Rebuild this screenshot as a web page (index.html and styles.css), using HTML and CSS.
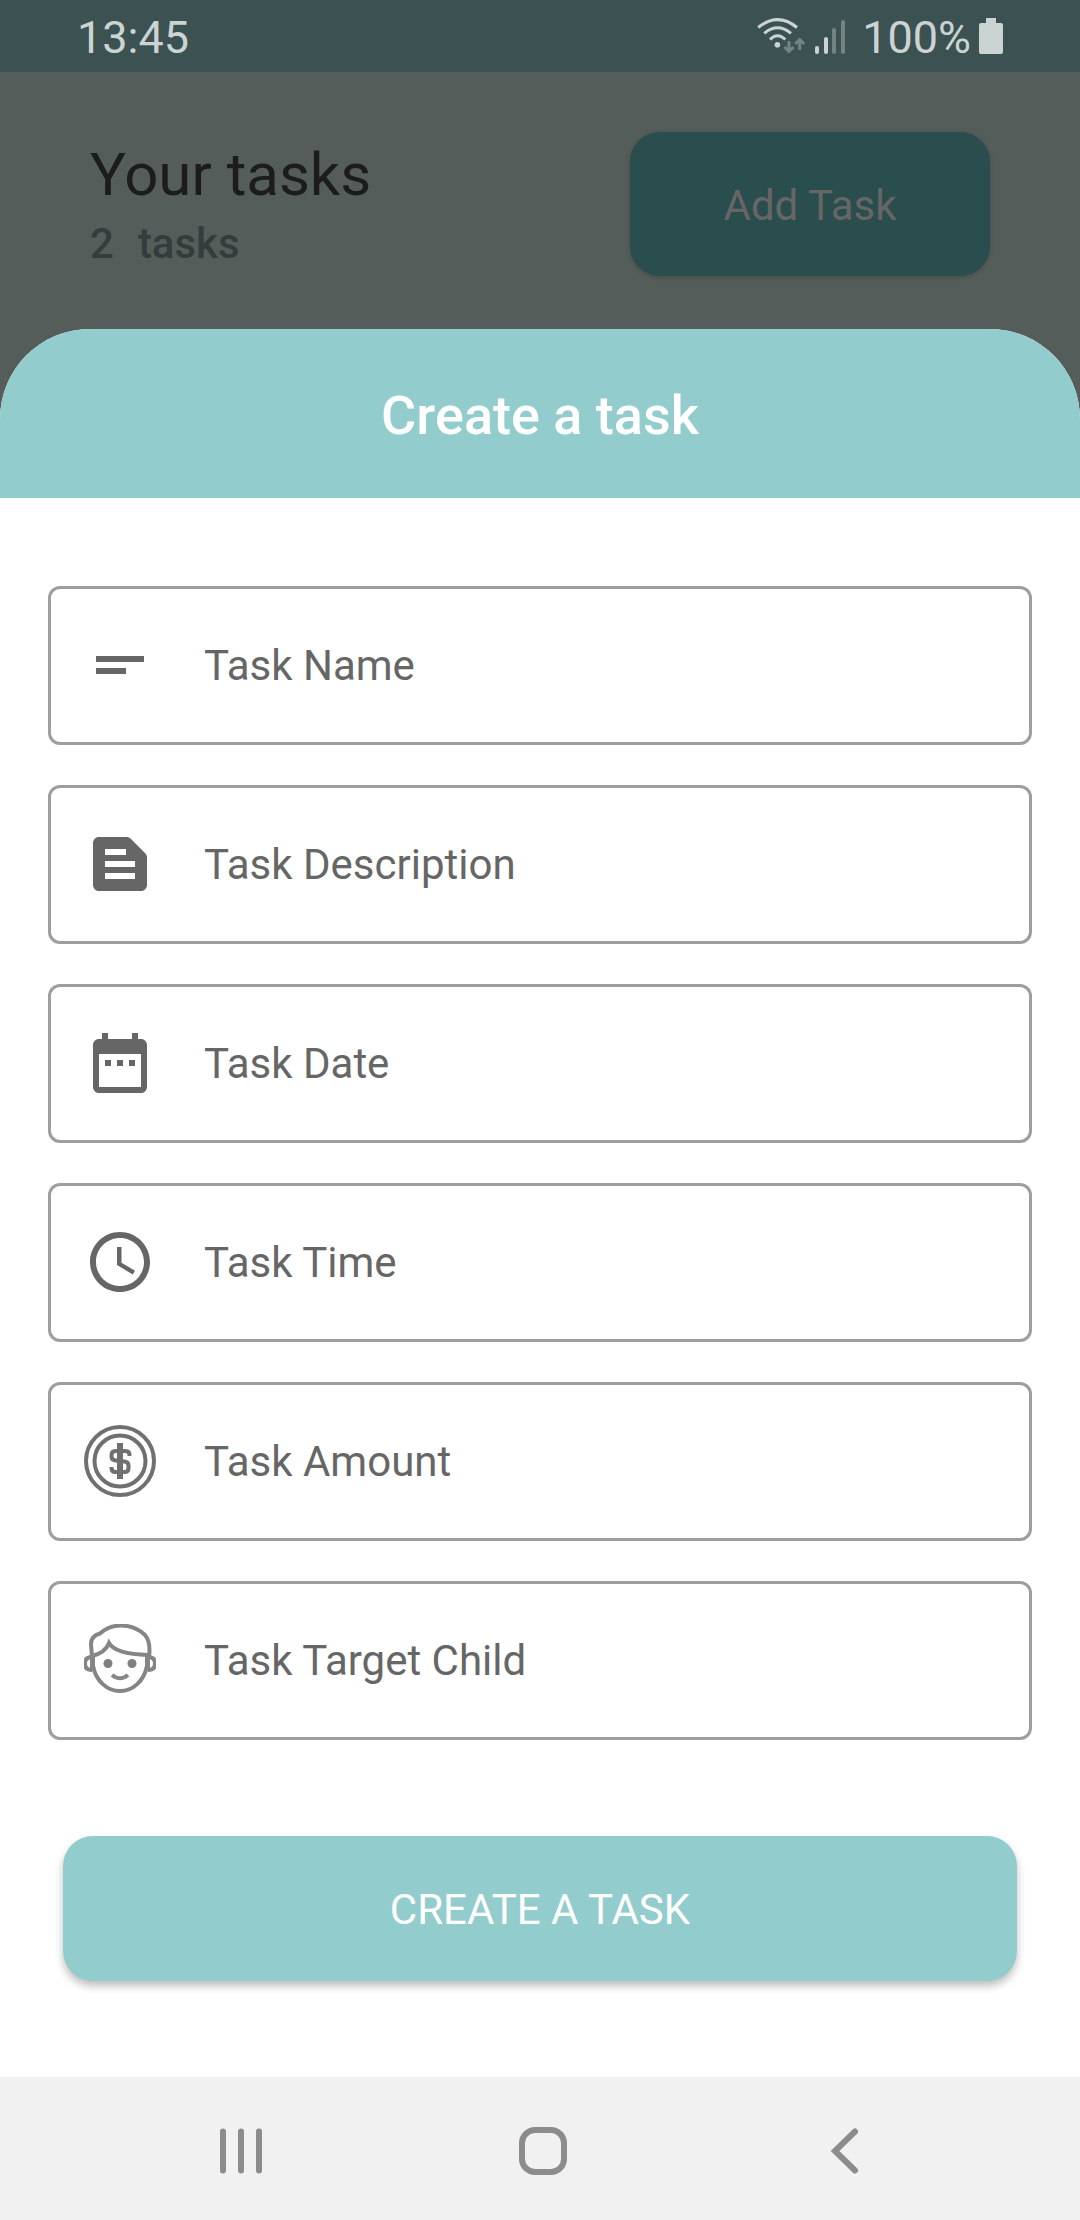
FILE: index.html
```html
<!DOCTYPE html>
<html lang="en">
<head>
<meta charset="utf-8">
<meta name="viewport" content="width=device-width, initial-scale=1">
<title>Create a task</title>
<link rel="stylesheet" href="styles.css">
</head>
<body class="screen">
  <div class="status">
    <span class="status-time">13:45</span>
    <svg class="status-wifi" width="48" height="36" viewBox="0 0 48 36" fill="none" stroke="currentColor" stroke-width="3" aria-hidden="true">
      <path d="M1.200 9.500Q20.500-6.200 40 9.500M7.300 15.300Q20.500 4.300 34 15.300M13 21.500Q20.500 14 28.300 21.500"/>
      <circle cx="20.400" cy="26.800" r="2.800" fill="currentColor" stroke="none"/>
      <path class="dim" d="M32 23v10M27.500 29l4.500 4.500 4.500-4.500M42.700 32V22M38.200 26l4.500-4.500 4.500 4.500"/>
    </svg>
    <svg class="status-signal" width="32" height="36" viewBox="0 0 32 36" fill="currentColor" aria-hidden="true">
      <rect x="1" y="28" width="4" height="8" rx="2"/>
      <rect x="10" y="19" width="4" height="17" rx="2"/>
      <rect class="dim-fill" x="18" y="10" width="4" height="26" rx="2"/>
      <rect class="dim-fill" x="27" y="2" width="4" height="34" rx="2"/>
    </svg>
    <span class="status-level">100%</span>
    <svg width="24" height="36" viewBox="0 0 24 36" fill="currentColor" aria-hidden="true">
      <path d="M7 0h10v5h5a2 2 0 0 1 2 2v27a2 2 0 0 1-2 2H2a2 2 0 0 1-2-2V7a2 2 0 0 1 2-2h5z"/>
    </svg>
  </div>

  <header class="header">
    <div>
      <h1 class="header-title">Your tasks</h1>
      <p class="header-count"><span>2</span><span>tasks</span></p>
    </div>
    <button class="add-button" type="button">Add Task</button>
  </header>

  <main class="sheet">
    <h2 class="sheet-title">Create a task</h2>
    <form class="form">
      <label class="field">
        <svg class="icon" viewBox="0 0 24 24" aria-hidden="true"><path d="M4 9h16v2H4zM4 13h10v2H4z"/></svg>
        <input class="input" type="text" placeholder="Task Name" aria-label="Task Name">
      </label>
      <label class="field">
        <svg class="icon" viewBox="0 0 24 24" aria-hidden="true"><path fill-rule="evenodd" d="M20.410 8.410l-4.830-4.830C15.210 3.210 14.700 3 14.170 3H5c-1.100 0-2 .9-2 2v14c0 1.100.9 2 2 2h14c1.100 0 2-.9 2-2V9.830c0-.53-.21-1.040-.59-1.420zM7 7h7v2H7zM17 17H7v-2h10zM17 13H7v-2h10z"/></svg>
        <input class="input" type="text" placeholder="Task Description" aria-label="Task Description">
      </label>
      <label class="field">
        <svg class="icon" viewBox="0 0 24 24" aria-hidden="true"><path fill-rule="evenodd" d="M19 4h-1V2h-2v2H8V2H6v2H5c-1.110 0-2 .9-2 2v14c0 1.100.89 2 2 2h14c1.100 0 2-.9 2-2V6c0-1.100-.9-2-2-2zM19 20H5V9h14zM7 11h2v2H7zM11 11h2v2h-2zM15 11h2v2h-2z"/></svg>
        <input class="input" type="text" placeholder="Task Date" aria-label="Task Date">
      </label>
      <label class="field">
        <svg class="icon" viewBox="0 0 24 24" aria-hidden="true"><path d="M11.990 2C6.470 2 2 6.480 2 12s4.470 10 9.990 10C17.520 22 22 17.520 22 12S17.520 2 11.990 2zM12 20c-4.420 0-8-3.580-8-8s3.580-8 8-8 8 3.580 8 8-3.580 8-8 8zM12.500 7H11v6l5.250 3.150.75-1.230-4.500-2.670z"/></svg>
        <input class="input" type="text" placeholder="Task Time" aria-label="Task Time">
      </label>
      <label class="field">
        <svg class="icon icon-line" viewBox="0 0 72 72" aria-hidden="true">
          <circle cx="36" cy="36" r="34"/>
          <circle cx="36" cy="36" r="25.500"/>
          <path d="M45.500 31v-1q0-4-4-4H31.500q-4 0-4 4v1.500q0 3.500 4 4l9 1q4 .5 4 4V43q0 4-4 4h-9q-4 0-4-4v-1"/>
          <path class="bar" d="M36 18v36"/>
        </svg>
        <input class="input" type="text" placeholder="Task Amount" aria-label="Task Amount">
      </label>
      <label class="field">
        <svg class="icon icon-line icon-child" viewBox="0 0 72 72" aria-hidden="true">
          <path d="M8 33L7 20Q7 12 16 9.500Q25 1.500 37 1.500Q51 1.500 61 11Q67 18 65 33"/>
          <path d="M8 32Q21 29 25 19Q31 30 64 31"/>
          <path d="M9 32V42C12 57 23 67 36 67C49 67 60 57 63 42V32"/>
          <path d="M8 33Q1 33 1 39.500Q1 46 8 46M64 33Q71 33 71 39.500Q71 46 64 46M28 51Q36 57.500 44 51"/>
          <path d="M8 33V46M64 33V46"/>
          <circle class="eye" cx="24" cy="39.500" r="4.500"/>
          <circle class="eye" cx="48" cy="39.500" r="4.500"/>
        </svg>
        <input class="input" type="text" placeholder="Task Target Child" aria-label="Task Target Child">
      </label>
      <button class="submit" type="submit">CREATE A TASK</button>
    </form>
  </main>

  <nav class="nav">
    <button class="nav-button" type="button" aria-label="Recent apps">
      <svg width="48" height="48" viewBox="0 0 48 48" aria-hidden="true"><path d="M6 4.500v39M24 4.500v39M42 4.500v39"/></svg>
    </button>
    <button class="nav-button" type="button" aria-label="Home">
      <svg width="48" height="48" viewBox="0 0 48 48" aria-hidden="true"><rect x="3" y="3" width="42" height="42" rx="13"/></svg>
    </button>
    <button class="nav-button" type="button" aria-label="Back">
      <svg width="48" height="48" viewBox="0 0 48 48" aria-hidden="true"><path d="M34 4.500L14 24l20 19.500"/></svg>
    </button>
  </nav>
</body>
</html>
```
FILE: styles.css
```css
* {
  box-sizing: border-box;
}

.screen {
  display: flex;
  flex-direction: column;
  min-height: 100vh;
  margin: 0;
  background: #555d5b;
  font-family: Roboto, "Liberation Sans", sans-serif;
  font-size: 42px;
}

button,
input {
  border: 0;
  padding: 0;
  font: inherit;
}

/* Status bar */
.status {
  display: flex;
  align-items: center;
  height: 72px;
  padding: 0 77px;
  background: #3c5252;
  color: #cbd4d3;
  font-size: 45px;
  line-height: 70px;
}

.status-time,
.status-level {
  padding-top: 4px;
}

.status-wifi {
  margin-left: auto;
}

.status-signal {
  margin: 0 16px 0 9px;
}

.status-level {
  margin-right: 8px;
}

.dim {
  stroke: #738483;
}

.dim-fill {
  fill: #738483;
}

/* Dimmed page header */
.header {
  display: flex;
  align-items: center;
  justify-content: space-between;
  padding: 60px 90px 53px;
}

.header-title {
  margin: 0;
  color: #1c1c1c;
  font-size: 60px;
  font-weight: 400;
  line-height: 72px;
}

.header-count {
  display: flex;
  gap: 24px;
  margin: 8px 0 0;
  color: #363b3b;
  font-weight: 500;
  line-height: 50px;
}

.add-button {
  width: 360px;
  height: 144px;
  padding-top: 3px;
  border-radius: 30px;
  background: #2a4d4d;
  box-shadow: 0 1px 5px rgba(0, 0, 0, 0.2);
  color: #666;
}

/* Bottom sheet */
.sheet {
  flex: 1;
  overflow: hidden;
  border-radius: 90px 90px 0 0;
  background: #fff;
}

.sheet-title {
  margin: 0;
  padding: 55px 0 50px;
  background: #93cccd;
  color: #fff;
  font-size: 54px;
  font-weight: 500;
  line-height: 64px;
  text-align: center;
}

.form {
  display: flex;
  flex-direction: column;
  gap: 40px;
  padding: 88px 48px 96px;
}

.field {
  display: flex;
  align-items: center;
  gap: 48px;
  height: 159px;
  padding: 0 33px;
  border: 3px solid #9e9e9e;
  border-radius: 12px;
}

.icon {
  flex: none;
  width: 72px;
  height: 73px;
  padding-bottom: 1px;
  fill: #666;
}

.icon-line {
  fill: none;
  stroke: #707070;
  stroke-width: 4;
}

.icon-child {
  stroke: #858585;
}

.bar {
  stroke-width: 6;
}

.eye {
  fill: #808080;
  stroke: none;
}

.input {
  flex: 1;
  min-width: 0;
  height: 100%;
  background: none;
  color: #666;
  outline: 0;
}

.input::placeholder {
  color: #666;
  opacity: 1;
}

.submit {
  height: 145px;
  margin: 56px 15px 0;
  padding-top: 2px;
  border-radius: 30px;
  background: #93cccd;
  box-shadow: 0 5px 8px rgba(0, 0, 0, 0.26);
  color: #fff;
}

/* System navigation */
.nav {
  display: flex;
  height: 143px;
  padding: 0 84px 0 90px;
  background: #f1f1f1;
}

.nav-button {
  display: flex;
  flex: 1;
  align-items: center;
  justify-content: center;
  padding-top: 4px;
  background: none;
}

.nav-button svg {
  fill: none;
  stroke: #8c8c8c;
  stroke-width: 6;
  stroke-linecap: round;
}
```
